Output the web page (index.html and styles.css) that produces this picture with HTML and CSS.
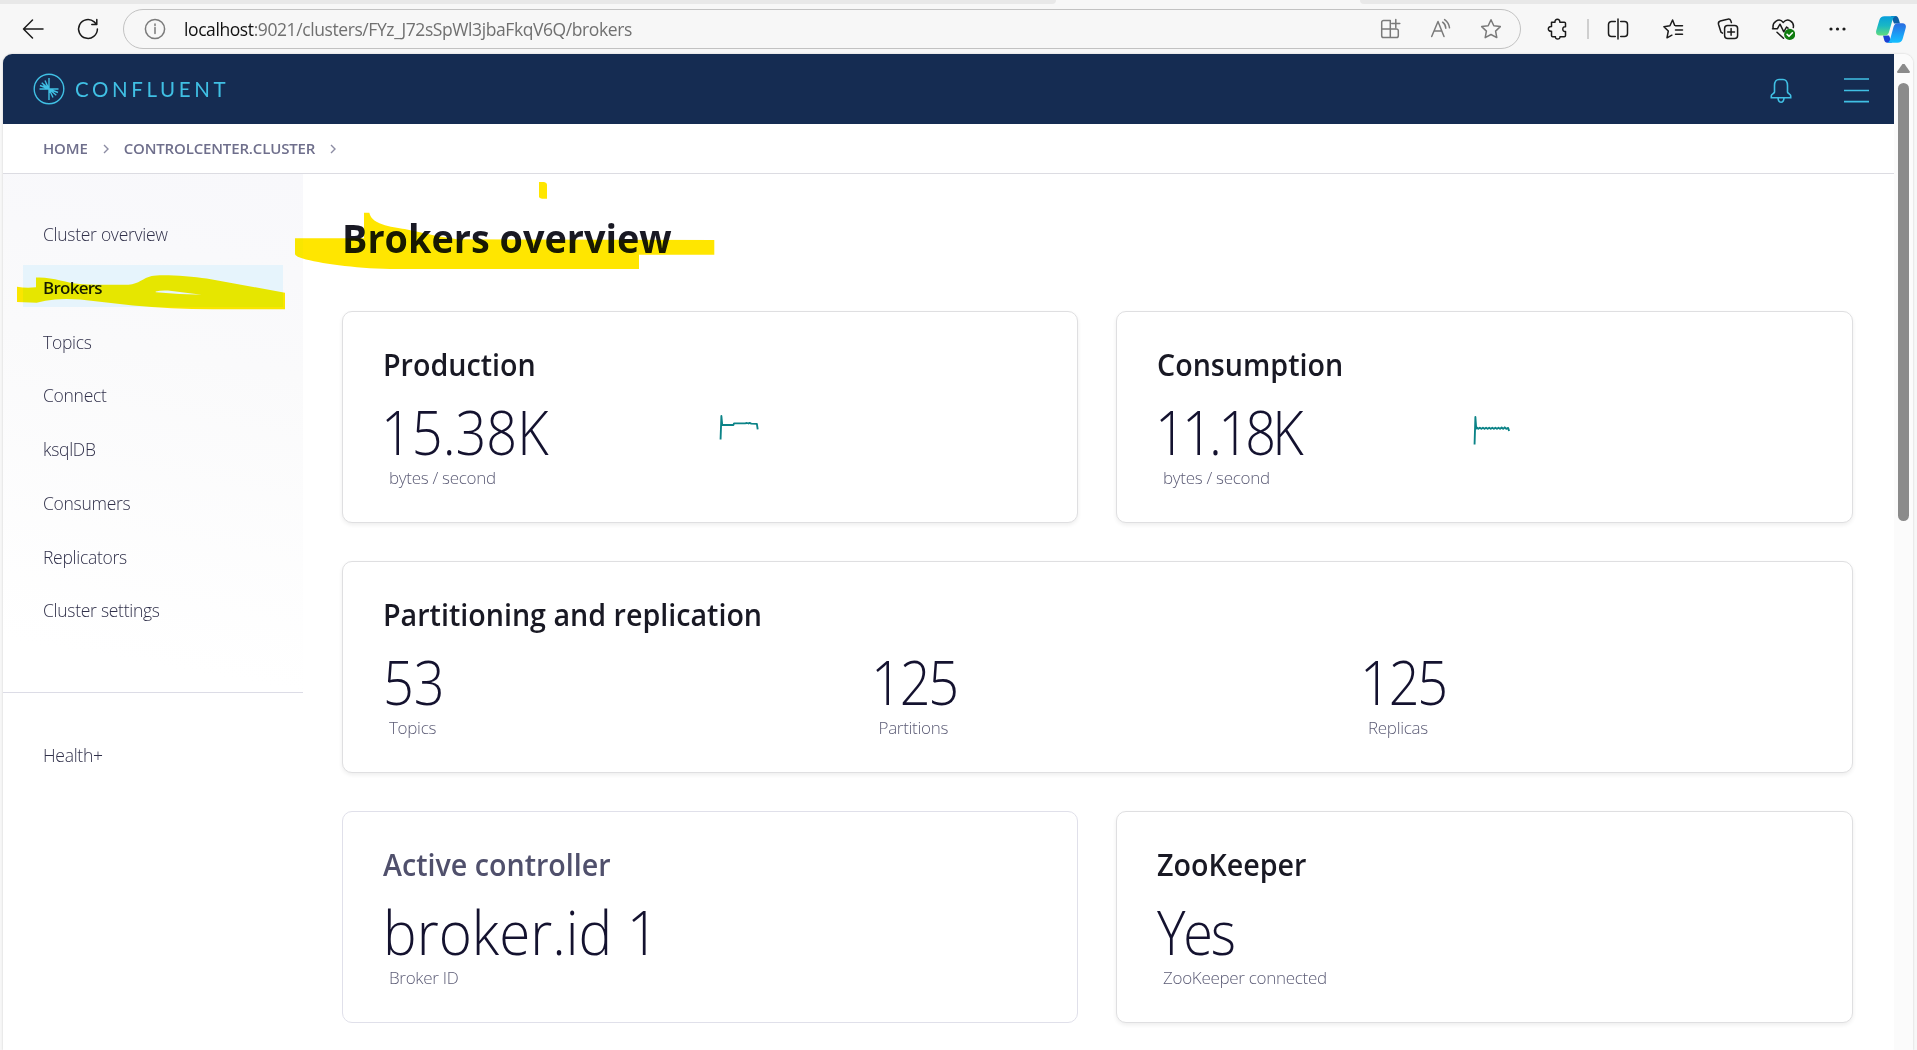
FILE: index.html
```html
<!DOCTYPE html>
<html lang="en">
<head>
<meta charset="utf-8">
<title>Brokers overview</title>
<link rel="stylesheet" href="styles.css">
</head>
<body>
<div class="window">
  <div class="tabstrip"><span class="tabs-left"></span><span class="tab-active"></span><span class="tabs-right"></span></div>

  <header class="toolbar">
    <span class="nav-btn"><svg class="icon" viewBox="0 0 24 24"><path d="M22 12H2.5M11.5 3l-9 9 9 9"/></svg></span>
    <span class="nav-btn nav-btn--reload"><svg class="icon" viewBox="0 0 24 24"><path d="M21.4 12a9.4 9.4 0 1 1-3.2-7.1l2.3 2.3M20.8 2.5v5h-5"/></svg></span>
    <div class="address">
      <svg class="icon icon--grey" viewBox="0 0 24 24"><circle cx="12" cy="12" r="9.6"/><path d="M12 10.5v6M12 7v1.4"/></svg>
      <span class="url"><b>localhost</b>:9021/clusters/FYz_J72sSpWl3jbaFkqV6Q/brokers</span>
      <span class="address-tools">
        <svg class="icon icon--grey" viewBox="0 0 24 24"><path d="M11.3 3.5H4.5a1.8 1.8 0 0 0-1.8 1.8v13.4a1.8 1.8 0 0 0 1.8 1.8h13a1.8 1.8 0 0 0 1.8-1.8v-5a1.8 1.8 0 0 0-1.8-1.8H2.7M11.3 3.5v17M16.8 2.5v8M12.8 6.5h8"/></svg>
        <svg class="icon icon--grey" viewBox="0 0 24 24"><path d="M2.7 19.5 9 4.5l6 15M5 14h7.8M13.6 5.2a8 8 0 0 1 3.2 6M15.600 2.600a12 12 0 0 1 4.900 8.200"/></svg>
        <svg class="icon icon--grey" viewBox="0 0 24 24"><path d="m12 2.800 2.800 5.900 6.500.9-4.700 4.500 1.200 6.500-5.800-3.100-5.800 3.100 1.200-6.500-4.700-4.500 6.500-.9z"/></svg>
      </span>
    </div>
    <div class="actions">
      <span class="action action--ext"><svg class="icon" viewBox="0 0 24 24"><path d="M5.500 5.200H9c-.6-3.800 5.400-3.800 4.800 0h4.500a1.200 1.200 0 0 1 1.200 1.200v3.400c-3.600-.8-3.600 5.500 0 4.700v4a1.200 1.200 0 0 1-1.200 1.200h-4.300c.4 3.200-5 3.200-4.600 0H6.700a1.200 1.200 0 0 1-1.200-1.200v-4.200c-4.200.4-4.200-5.200 0-4.700z"/></svg></span>
      <span class="separator"></span>
      <span class="action"><svg class="icon" viewBox="0 0 24 24"><path d="M9.300 4.500H5.500a3 3 0 0 0-3 3v9a3 3 0 0 0 3 3h3.800M14.700 4.500h3.800a3 3 0 0 1 3 3v9a3 3 0 0 1-3 3h-3.800M12 2v20"/></svg></span>
      <span class="action"><svg class="icon" viewBox="0 0 24 24"><path d="M14.500 8.700h7M14.500 13h7M14.500 17.300h7M13.600 8.200l-2-5.200-2.700 5.800-6 .9 4.400 4.300-1.300 6.800 4.900-2.600"/></svg></span>
      <span class="action"><svg class="icon" viewBox="0 0 24 24"><rect x="8.600" y="8.400" width="13" height="13" rx="3"/><path d="M15.100 11.500v6.800M11.700 14.900h6.800M6.500 16.200 5 15.200 2.500 7.300a2.800 2.800 0 0 1 1.800-3.300l7.200-1.800a2.800 2.800 0 0 1 3.400 1.800l.5 1.600"/></svg></span>
      <span class="action"><svg class="icon" viewBox="0 0 24 24"><path d="M2.200 11.400C.8 5 8 .2 12.300 5.400 16.500.2 23.500 4.600 22.300 10.500M1.500 11.800h4.800l2.700-4.600 3.800 7.600 2.700-4.800 1.500 1.200M6 15.300l6.500 6"/><circle class="badge" cx="18.700" cy="17.400" r="5.600"/><path class="badge-tick" d="m16.100 17.400 1.900 1.900 3.400-3.500"/></svg></span>
      <span class="action"><svg class="icon" viewBox="0 0 24 24"><g class="dots"><circle cx="5" cy="12" r="1.600"/><circle cx="11.500" cy="12" r="1.600"/><circle cx="18" cy="12" r="1.600"/></g></svg></span>
      <span class="action action--copilot"><svg class="copilot" viewBox="0 0 30 27">
        <defs>
          <linearGradient id="cg1" x1="0" y1="0" x2="0" y2="1"><stop offset="0" stop-color="#089fdc"/><stop offset=".5" stop-color="#1ab8c4"/><stop offset="1" stop-color="#62dc7c"/></linearGradient>
          <linearGradient id="cg2" x1="0" y1="0" x2="0" y2="1"><stop offset="0" stop-color="#2a6be0"/><stop offset=".6" stop-color="#1ba0f6"/><stop offset="1" stop-color="#15c0ff"/></linearGradient>
        </defs>
        <path fill="#0b5fa6" d="M15 0h4.500c2 0 3 2 3.500 4l1 3.500h-6z"/>
        <path fill="#1b41d4" d="M7 19.500h6l3 7.200h-4.500c-2.300 0-3-1.500-3.500-3.500z"/>
        <path fill="url(#cg1)" d="M8.500.3H20c-2 .4-2.900 1.500-3.600 4L13 16c-.6 2.400-2 3.500-4.500 3.500H3.600C.7 19.500-.4 17.500.2 14.700L3.300 4.200C4 1.700 5.800.3 8.500.3z"/>
        <path fill="url(#cg2)" d="M21.500 26.700H11c2-.4 2.700-1.700 3.300-4L17.500 11c.6-2.300 2-3.700 4.500-3.700h4.400c3 0 4 2 3.300 4.800l-3 10.600c-.7 2.600-2.500 4-5.200 4z"/>
      </svg></span>
    </div>
  </header>

  <div class="viewport">
    <div class="page">
      <header class="masthead">
        <div class="brand">
          <svg class="brand-mark" viewBox="0 0 32 32"><circle cx="16" cy="16" r="14.800"/><path d="M16 16V5M16 16 12 7.500M16 16 8.700 9.700M16 16l-9-3.500M16 16H6.500M16 16v11M16 16l4 8.500M16 16l7.300 6.300M16 16l9 3.500M16 16h9.500M13 10.500 16 16l-6-3"/></svg>
          <span class="brand-name">CONFLUENT</span>
        </div>
        <div class="masthead-tools">
          <svg class="bell" viewBox="0 0 24 26"><path d="M5.500 15V8.500c0-3.700 2-6 4.500-6h4c2.500 0 4.500 2.300 4.500 6V15c.3 1.700 3.200 2.200 3.200 3.800v1.900H2.300v-1.900c0-1.600 2.900-2.100 3.200-3.800zM9 21c.2 2.800 1.300 4.200 3 4.200s2.800-1.400 3-4.200"/></svg>
          <svg class="menu" viewBox="0 0 25 26"><path d="M0 2h25M0 13.500h25M0 24.700h25"/></svg>
        </div>
      </header>

      <nav class="breadcrumb">
        <span>HOME</span><svg class="chevron" viewBox="0 0 6 10"><path d="m1 1 4 4-4 4"/></svg>
        <span>CONTROLCENTER.CLUSTER</span><svg class="chevron" viewBox="0 0 6 10"><path d="m1 1 4 4-4 4"/></svg>
      </nav>

      <div class="body">
        <aside class="sidebar">
          <div class="nav-list">
            <a class="nav-item">Cluster overview</a>
            <a class="nav-item nav-item--active">Brokers</a>
            <a class="nav-item">Topics</a>
            <a class="nav-item">Connect</a>
            <a class="nav-item">ksqlDB</a>
            <a class="nav-item">Consumers</a>
            <a class="nav-item">Replicators</a>
            <a class="nav-item">Cluster settings</a>
          </div>
          <div class="nav-list nav-list--extra">
            <a class="nav-item">Health+</a>
          </div>
        </aside>

        <main class="content">
          <h1>Brokers overview</h1>
          <div class="cards">
            <section class="card">
              <h2>Production</h2>
              <div class="throughput">
                <div class="metric"><div class="value value--one">15.38K</div><div class="label">bytes / second</div></div>
                <svg class="spark" viewBox="0 0 40 32" preserveAspectRatio="none"><path d="M1.500 25.500 2.300 2l.8 9h10.800l.6-1.700H25l2-.3 1.500.5 1-.7 1.500.8 5.500.2.800 5.500"/></svg>
              </div>
            </section>
            <section class="card">
              <h2>Consumption</h2>
              <div class="throughput throughput--near">
                <div class="metric"><div class="value value--one value--tight">11.18K</div><div class="label">bytes / second</div></div>
                <svg class="spark" viewBox="0 0 40 32" preserveAspectRatio="none"><path d="M1.500 30.500 2.300 3l.8 11.500 1-.8 1 1.200 1.500-1.200 1.500 1.200 1.500-1.200 1.500 1.200 1.500-1.200 1.500 1.200 1.500-1.200 1.500 1.200 1.500-1.200 1.500 1.200 1.500-1.200 1.500 1.200 1.500-1.200 1.500 1.200 1.500-1.400 1.500 1.400 1.500-1.600 1.500 1.600 1.800-1 .9 3"/></svg>
              </div>
            </section>
            <section class="card card--wide">
              <h2>Partitioning and replication</h2>
              <div class="metrics">
                <div class="metric"><div class="value">53</div><div class="label">Topics</div></div>
                <div class="metric"><div class="value value--one value--snug">125</div><div class="label">Partitions</div></div>
                <div class="metric"><div class="value value--one value--snug">125</div><div class="label">Replicas</div></div>
              </div>
            </section>
            <section class="card card--flat">
              <h2>Active controller</h2>
              <div class="metric"><div class="value value--text">broker.id 1</div><div class="label">Broker ID</div></div>
            </section>
            <section class="card">
              <h2>ZooKeeper</h2>
              <div class="metric"><div class="value value--snug">Yes</div><div class="label">ZooKeeper connected</div></div>
            </section>
          </div>
        </main>
      </div>
    </div>
    <div class="scrollbar"><span class="scroll-up"></span><span class="scroll-thumb"></span></div>
  </div>

  <svg class="marker" viewBox="0 0 1917 1050">
    <path d="M539 182h5q3 .5 3 3v13.700h-5q-3-.5-3-2z"/>
    <path d="M295 238.300H364V212.700h5.300C372 226 396 227 407 229.500S435 236 457 239.300L714.300 240v14.700H639V269H397C360 269 325 264 306 259.500Q295 256.500 295 254z"/>
    <path fill-rule="evenodd" d="M17 286.700Q26 288.500 36 287.300V277.500C52 276.500 66 283 80 284S116 285 128.500 284.700C139 284 143 278 151.700 276S190 276 206.700 278.500L285 292.700V309.300H213Q170 309 133 305.500L80 299.500Q65 298.500 55 299.500T36.700 302.700L17 302zM155.700 291.500Q161 290 168 290.500L201.700 294.700Q180 294.500 155.700 292.200z"/>
  </svg>
</div>
</body>
</html>
```

FILE: styles.css
```css
* { box-sizing: border-box; }

body {
  margin: 0;
  background: #f7f7f7;
  font-family: "Open Sans", "Noto Sans", sans-serif;
  color: #191924;
}

.window {
  position: relative;
  display: flex;
  flex-direction: column;
  height: 1050px;
  overflow: hidden;
}

/* Browser chrome */
.tabstrip { display: flex; height: 4px; background: #f7f7f7; flex: none; }
.tabs-left { width: 1056px; background: #e8e8e8; border-bottom-right-radius: 6px; }
.tab-active { width: 304px; }
.tabs-right { flex: 1; background: #e8e8e8; border-bottom-left-radius: 8px; }

.toolbar { display: flex; align-items: center; height: 50px; padding-left: 21px; flex: none; }
.nav-btn { display: flex; margin-right: 31px; }
.nav-btn--reload { margin-right: 23px; }

.icon {
  display: block;
  width: 24px;
  height: 24px;
  fill: none;
  stroke: #1b1b1b;
  stroke-width: 1.5;
  stroke-linecap: round;
  stroke-linejoin: round;
}
.icon--grey { stroke: #7a7a7a; }
.badge { fill: #0f7b0f; stroke: none; }
.badge-tick { stroke: #fff; stroke-width: 1.6; }
.dots { fill: #1b1b1b; stroke: none; }

.address {
  display: flex;
  align-items: center;
  width: 1398px;
  height: 40px;
  padding: 0 17px 0 19px;
  border: 1px solid #c2c2c2;
  border-radius: 20px;
}
.url {
  flex: 1;
  margin-left: 17px;
  font-size: 17.5px;
  line-height: 38px;
  letter-spacing: -0.41px;
  color: #707070;
}
.url b { font-weight: 400; color: #111; }
.address-tools { display: flex; gap: 26px; }

.actions { display: flex; align-items: center; flex: 1; margin-left: 8px; }
.action { display: flex; justify-content: center; width: 55px; }
.action--ext { width: 57px; }
.action--copilot { width: 51px; }
.separator { width: 2px; height: 20px; margin: 0 1px; background: #cfcfcf; }
.copilot { display: block; width: 30px; height: 27px; }

.viewport {
  display: flex;
  flex: 1;
  width: 1910px;
  margin-left: 3px;
  background: #fff;
  border-radius: 9px 9px 0 0;
  overflow: hidden;
  box-shadow: 0 0 2px #c4c4c4;
}
.page { width: 1891px; }

.scrollbar {
  display: flex;
  flex-direction: column;
  align-items: center;
  width: 19px;
  padding-top: 10px;
  background: #fbfbfb;
}
.scroll-up {
  width: 13px;
  height: 9px;
  background: #8b8b8b;
  clip-path: polygon(42% 0, 58% 0, 100% 85%, 96% 100%, 4% 100%, 0 85%);
}
.scroll-thumb { width: 11px; height: 438px; margin-top: 10px; border-radius: 6px; background: #8b8b8b; }

/* Masthead */
.masthead {
  display: flex;
  align-items: center;
  justify-content: space-between;
  height: 70px;
  padding: 0 25px 0 30px;
  background: #152c52;
}
.brand { display: flex; align-items: center; gap: 10px; margin-top: -1px; }
.brand-mark { width: 32px; height: 32px; fill: none; stroke: #40c0e4; stroke-width: 1.4; }
.brand-name {
  font-family: Lato, sans-serif;
  font-size: 20.5px;
  line-height: 30px;
  letter-spacing: 3.6px;
  color: #40c0e4;
}
.masthead-tools { display: flex; align-items: center; gap: 51px; padding-top: 1px; }
.bell { width: 24px; height: 26px; fill: none; stroke: #40c0e4; stroke-width: 1.6; }
.menu { width: 25px; height: 26px; fill: none; stroke: #40c0e4; stroke-width: 1.7; }

.breadcrumb {
  display: flex;
  align-items: center;
  height: 50px;
  padding: 0 0 2px 40px;
  border-bottom: 1px solid #dcdce2;
  font-size: 15px;
  font-weight: 600;
  letter-spacing: -0.15px;
  color: #6f6f8c;
}
.chevron { width: 6px; height: 10px; margin: 2px 15px 0; fill: none; stroke: #8c8ca3; stroke-width: 1.4; }

/* Sidebar */
.body { display: flex; height: 876px; }
.sidebar { width: 300px; background: linear-gradient(190deg, #f8f8fb 0, #fafafb 200px, #fff 510px); }
.nav-list { display: flex; flex-direction: column; gap: 11.75px; padding: 37px 20px 63px; }
.nav-list--extra { padding-top: 39px; border-top: 1px solid #dcdce6; }
.nav-item {
  height: 42px;
  padding: 3px 20px 0;
  font-size: 17.5px;
  font-weight: 300;
  line-height: 40px;
  letter-spacing: -0.28px;
  color: #30304a;
}
.nav-item--active {
  background: #e6f4fc;
  font-size: 17px;
  font-weight: 600;
  letter-spacing: -0.75px;
  color: #191924;
}

/* Content */
.content { flex: 1; padding: 37px 41px 0 39px; }
h1, h2, .value { transform-origin: 0 50%; white-space: nowrap; }
h1 { margin: 0 0 46px; font-size: 40px; font-weight: 700; line-height: 54px; transform: scaleX(0.945); }
h2 { margin: 0 0 11px; font-size: 30px; font-weight: 600; line-height: 40px; transform: scaleX(0.955); }
.cards { display: grid; grid-template-columns: 736fr 737fr; gap: 38px; }
.card {
  height: 212px;
  padding: 32.5px 40px 0;
  border: 1px solid #dfdfe1;
  border-radius: 10px;
  background: #fff;
  box-shadow: 0 2px 4px rgba(0, 0, 0, 0.07);
}
.card--wide { grid-column: 1 / -1; }
.card--flat { border-color: #e0e0ea; box-shadow: none; }
.card--flat h2 { color: #50506c; }

.metrics { display: grid; grid-template-columns: repeat(3, 1fr); gap: 39.5px; }
.throughput { display: flex; }
.throughput .metric { width: 335.5px; }
.throughput--near .metric { width: 316px; }
.value {
  font-size: 60px;
  font-weight: 300;
  line-height: 72px;
  transform: scaleX(0.9);
  color: #14122f;
}
.value--one { margin-left: -2px; }
.value--snug { letter-spacing: -2.4px; }
.value--tight { letter-spacing: -4.2px; }
.value--text { transform: scaleX(0.942); }
.label {
  margin-top: -1px;
  padding-left: 6px;
  font-size: 17px;
  font-weight: 300;
  line-height: 22px;
  letter-spacing: -0.3px;
  color: #5c5c76;
}
.spark { width: 41.5px; height: 32px; margin-top: 18px; fill: none; stroke: #0b8387; stroke-width: 1.8; stroke-linejoin: round; }

/* Highlighter strokes drawn over the page */
.marker {
  position: absolute;
  inset: 0;
  width: 1917px;
  height: 1050px;
  fill: #ffe600;
  mix-blend-mode: darken;
  pointer-events: none;
}
```
